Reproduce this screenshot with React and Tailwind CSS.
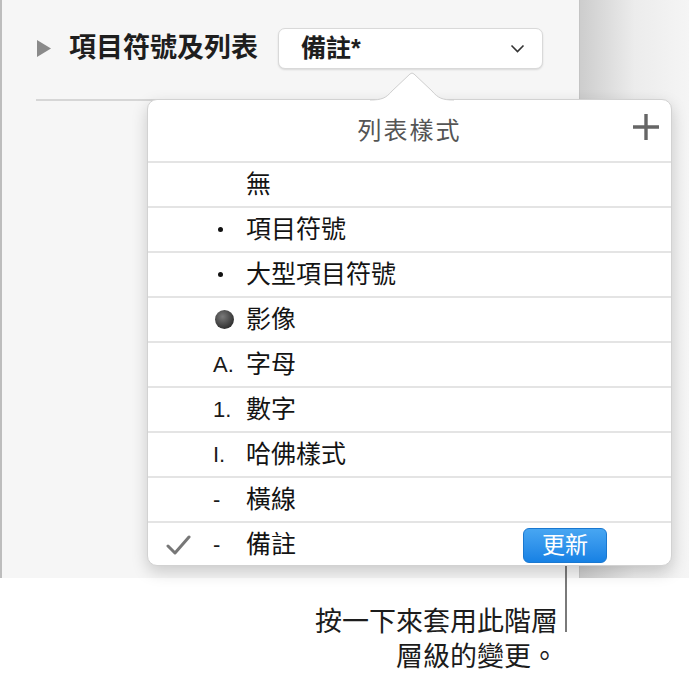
const font = {
  fontFamily: '"Liberation Sans", "Noto Sans CJK TC", sans-serif',
};

const rows = [
  { mark: null, label: "無" },
  { mark: "dot", label: "項目符號" },
  { mark: "dot", label: "大型項目符號" },
  { mark: "ball", label: "影像" },
  { mark: "A.", label: "字母" },
  { mark: "1.", label: "數字" },
  { mark: "I.", label: "哈佛樣式" },
  { mark: "-", label: "橫線" },
  { mark: "-", label: "備註", checked: true, update: true },
];

function Mark({ mark }) {
  if (mark === "dot")
    return <span className="ml-[5px] block w-[5px] h-[5px] rounded-full bg-[#111]" />;
  if (mark === "ball")
    return (
      <span className="ml-[2px] block w-[19px] h-[19px] rounded-full bg-[radial-gradient(circle_at_40%_35%,#7a7a7a,#333_70%)]" />
    );
  if (mark) return <span className="text-[22px] text-[#1a1a1a]">{mark}</span>;
  return null;
}

export default function App() {
  return (
    <div className="relative w-[689px] h-[678px] bg-white overflow-hidden" style={font}>
      {/* top area */}
      <div className="flex h-[578px]">
        <div className="w-[580px] bg-[#f6f6f6] border-l-2 border-l-[#bdbdbd] border-r border-r-[#c4c4c4]">
          <div className="flex items-center h-[41px] mt-[28px] pl-[34px]">
            <svg width="16" height="17" viewBox="0 0 16 17">
              <path d="M1 0 L15 8.5 L1 17 Z" fill="#8a8a8a" />
            </svg>
            <span className="ml-[17px] text-[27px] font-bold text-[#1e1e1e] leading-none">
              項目符號及列表
            </span>
            <div className="ml-[20px] w-[265px] h-[41px] bg-white rounded-[7px] border border-[#d9d9d9] shadow-[0_1px_2px_rgba(0,0,0,0.12)] flex items-center pl-[22px] pr-[17px]">
              <span className="text-[25px] font-bold text-[#1e1e1e] leading-none">備註*</span>
              <svg className="ml-auto" width="15" height="9" viewBox="0 0 15 9">
                <path d="M1.5 1.5 L7.5 7.5 L13.5 1.5" fill="none" stroke="#333" strokeWidth="1.6" />
              </svg>
            </div>
          </div>
          <div className="ml-[34px] mt-[30px] h-[2px] bg-[#d6d6d6]" />
        </div>
        <div className="flex-1 bg-gradient-to-r from-[#cdcdcd] via-[#ececec] to-[#f5f5f5]" />
      </div>

      {/* callout text */}
      <div className="pr-[131px] pt-[27px] text-right text-[27px] leading-[35px] text-[#1c1c1c]">
        <div>按一下來套用此階層</div>
        <div>層級的變更。</div>
      </div>

      {/* callout line */}
      <div className="absolute left-[565px] top-[562px] w-[2px] h-[70px] bg-[#7a7a7a]" />

      {/* popover */}
      <div className="absolute left-[147px] top-[99px] w-[525px] h-[467px] bg-white rounded-[10px] border border-[#d2d2d2] shadow-[0_6px_16px_rgba(0,0,0,0.18)]">
        <div className="relative h-[61px] flex items-center justify-center">
          <span className="text-[24px] text-[#555] tracking-[2px]">列表樣式</span>
          <svg className="absolute left-[485px] top-[14px]" width="26" height="26" viewBox="0 0 26 26">
            <path d="M13 0 V26 M0 13 H26" stroke="#666" strokeWidth="3.4" />
          </svg>
        </div>
        {rows.map((r, i) => (
          <div key={i} className="relative flex items-center h-[45px] border-t-2 border-[#e4e4e4]">
            <div className="w-[65px] flex pl-[18px]">
              {r.checked && (
                <svg width="25" height="20" viewBox="0 0 25 20">
                  <path d="M2 11 L9 18 L23 2" fill="none" stroke="#777" strokeWidth="3" strokeLinecap="round" strokeLinejoin="round" />
                </svg>
              )}
            </div>
            <div className="w-[33px] flex items-center">
              <Mark mark={r.mark} />
            </div>
            <span className="text-[25px] text-[#141414] leading-none">{r.label}</span>
            {r.update && (
              <div className="absolute left-[375px] top-[5px] w-[84px] h-[35px] rounded-[6px] bg-gradient-to-b from-[#47a6f2] to-[#1681e4] border border-[#1a78d0] flex items-center justify-center">
                <span className="text-[23px] text-white leading-none">更新</span>
              </div>
            )}
          </div>
        ))}
      </div>

      {/* popover arrow */}
      <svg
        className="absolute left-[370px] top-[72px]"
        width="84"
        height="30"
        viewBox="0 0 84 30"
      >
        <path
          d="M0 28 C12 28 16 26 22 19 L40 2 Q42 0 44 2 L62 19 C68 26 72 28 84 28 L84 30 L0 30 Z"
          fill="#fff"
        />
        <path
          d="M0 28 C12 28 16 26 22 19 L40 2 Q42 0 44 2 L62 19 C68 26 72 28 84 28"
          fill="none"
          stroke="#cfcfcf"
          strokeWidth="1"
        />
      </svg>
    </div>
  );
}
